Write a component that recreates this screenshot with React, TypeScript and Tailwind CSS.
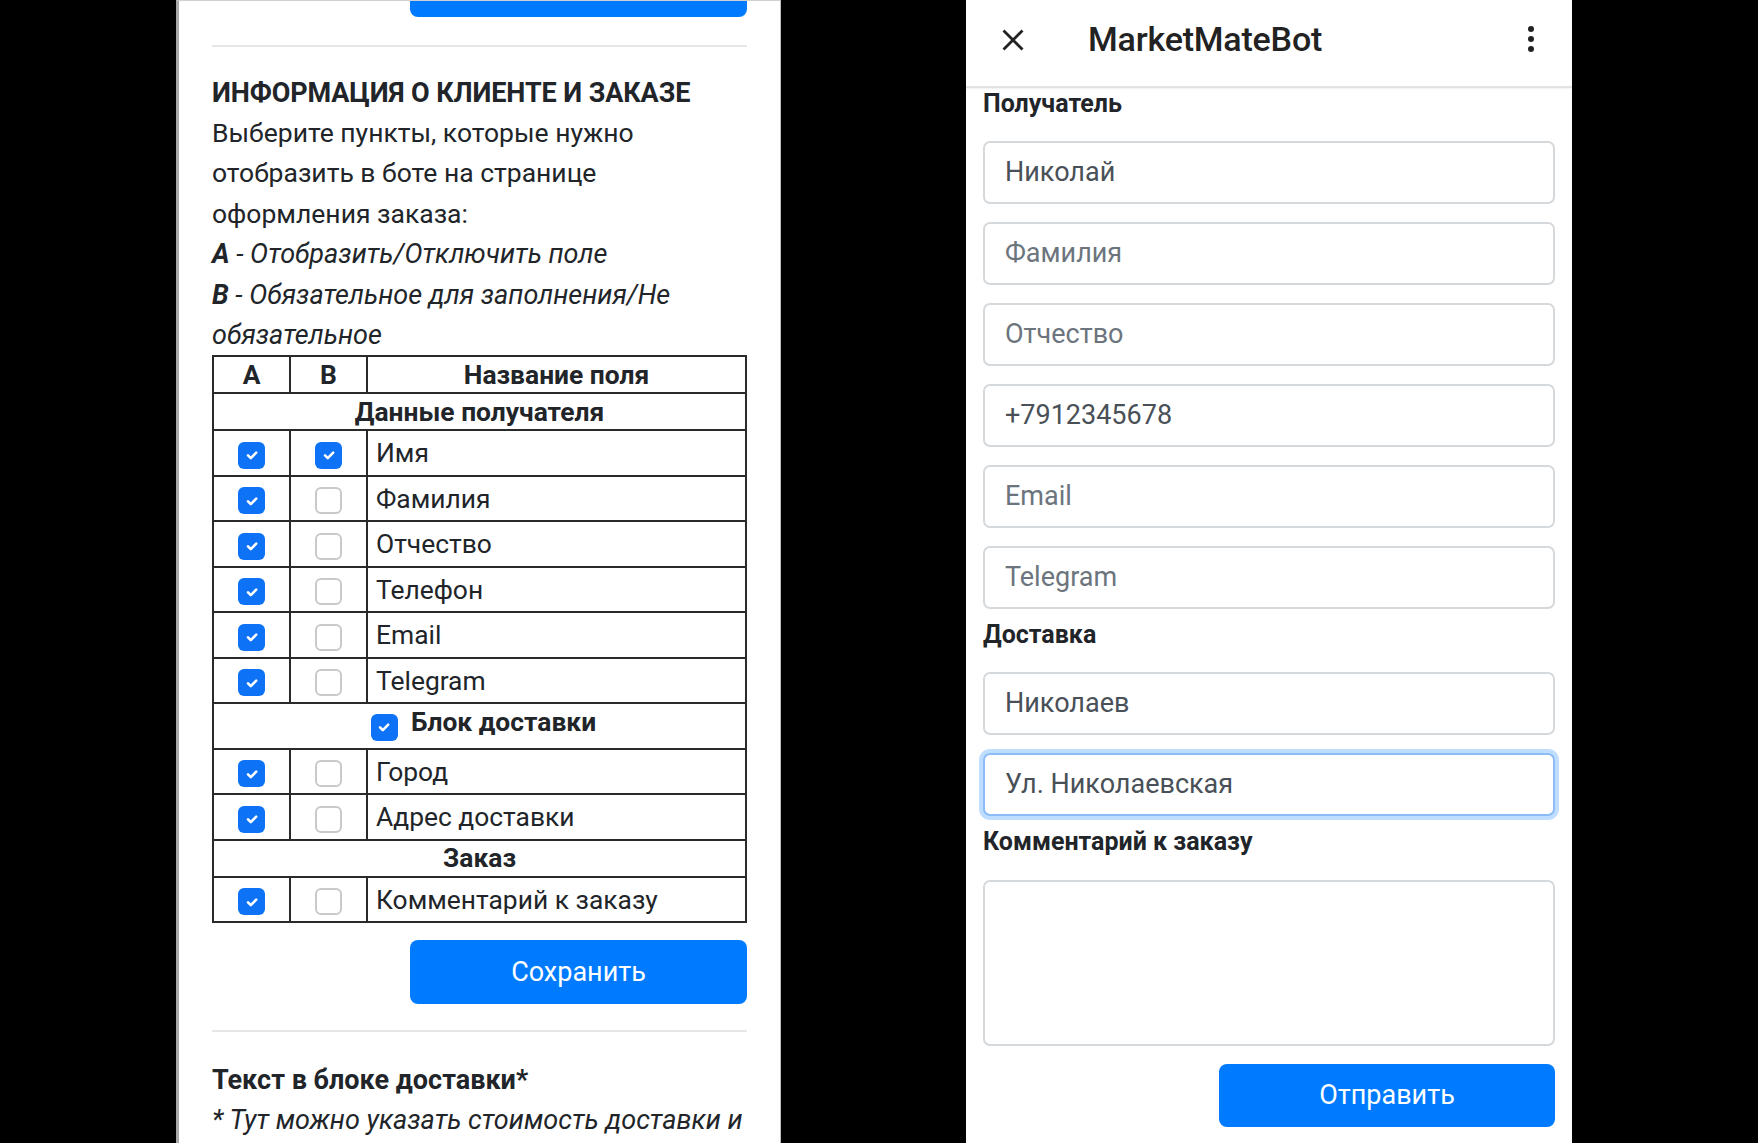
import React from "react";

function Check({ checked }: { checked: boolean }) {
  if (checked) {
    return (
      <span className="inline-flex w-[27px] h-[27px] rounded-[6px] bg-[#0d72f5] items-center justify-center align-middle">
        <svg viewBox="0 0 20 20" className="w-[20px] h-[20px]">
          <path d="M6 10.3l2.8 2.8L14.2 7.6" fill="none" stroke="white" strokeWidth="2.6" strokeLinecap="round" strokeLinejoin="round" />
        </svg>
      </span>
    );
  }
  return <span className="inline-block w-[27px] h-[27px] rounded-[6px] border-2 border-[#c9c9c9] bg-white align-middle" />;
}

const rows1: [string, boolean][] = [
  ["Имя", true],
  ["Фамилия", false],
  ["Отчество", false],
  ["Телефон", false],
  ["Email", false],
  ["Telegram", false],
];
const rows2: [string, boolean][] = [
  ["Город", false],
  ["Адрес доставки", false],
];

function Row({ name, b }: { name: string; b: boolean }) {
  return (
    <tr className="h-[45.5px]">
      <td className="border-2 border-[#2a2a2a] text-center p-0">
        <Check checked={true} />
      </td>
      <td className="border-2 border-[#2a2a2a] text-center p-0">
        <Check checked={b} />
      </td>
      <td className="border-2 border-[#2a2a2a] pl-[8px] py-0 text-left">{name}</td>
    </tr>
  );
}

function Input({ value, placeholder, focused }: { value?: string; placeholder?: string; focused?: boolean }) {
  return (
    <div
      className={
        focused
          ? "h-[63px] rounded-[7px] border-2 border-[#8cbcf7] shadow-[0_0_0_4px_rgba(0,123,255,0.25)] flex items-center pl-[20px] text-[27px] text-[#495057] bg-white"
          : "h-[63px] rounded-[7px] border-2 border-[#d6d9dc] flex items-center pl-[20px] text-[27px] bg-white"
      }
    >
      {value ? <span className="text-[#495057]">{value}</span> : <span className="text-[#6c757d]">{placeholder}</span>}
    </div>
  );
}

export default function App() {
  return (
    <div className="w-[1758px] h-[1143px] bg-black flex overflow-hidden font-['Roboto','Noto_Sans',sans-serif] text-[#212529]">
      {/* Left panel */}
      <div className="ml-[176px] w-[605px] h-full bg-white border-l-[3px] border-l-[#a8a8a8] border-t border-t-[#d0d0d0] border-r border-r-[#bdbdbd] overflow-hidden pl-[33px] pr-[33px] flex flex-col">
        <div className="ml-auto w-[337px] h-[16px] shrink-0 bg-[#007bff] rounded-b-[8px]" />
        <div className="mt-[28px] h-[2px] shrink-0 bg-[#e6e6e6]" />
        <div className="mt-[26px] text-[27px] leading-[40px] font-bold tracking-[-0.1px]">ИНФОРМАЦИЯ О КЛИЕНТЕ И ЗАКАЗЕ</div>
        <div className="text-[26.5px] leading-[40.4px]">
          <div>Выберите пункты, которые нужно</div>
          <div>отобразить в боте на странице</div>
          <div>оформления заказа:</div>
          <div className="italic text-[27px]">
            <span className="font-bold">A</span> - Отобразить/Отключить поле
          </div>
          <div className="italic text-[27px]">
            <span className="font-bold">B</span> - Обязательное для заполнения/Не
          </div>
          <div className="italic text-[27px]">обязательное</div>
        </div>
        <table className="w-[535px] border-collapse border-2 border-[#2a2a2a] text-[26.4px] leading-[32px] table-fixed">
          <colgroup>
            <col className="w-[77px]" />
            <col className="w-[77px]" />
            <col />
          </colgroup>
          <tbody>
            <tr className="h-[37px] font-bold">
              <td className="border-2 border-[#2a2a2a] text-center p-0">A</td>
              <td className="border-2 border-[#2a2a2a] text-center p-0">B</td>
              <td className="border-2 border-[#2a2a2a] text-center p-0">Название поля</td>
            </tr>
            <tr className="h-[37px] font-bold">
              <td colSpan={3} className="border-2 border-[#2a2a2a] text-center p-0">Данные получателя</td>
            </tr>
            {rows1.map(([n, b]) => (
              <Row key={n} name={n} b={b} />
            ))}
            <tr className="h-[45.5px]">
              <td colSpan={3} className="border-2 border-[#2a2a2a] p-0">
                <div className="flex items-center justify-center gap-[13px] pl-[8px]">
                  <span className="mt-[2px] flex">
                    <Check checked={true} />
                  </span>
                  <span className="font-bold mt-[-8px]">Блок доставки</span>
                </div>
              </td>
            </tr>
            {rows2.map(([n, b]) => (
              <Row key={n} name={n} b={b} />
            ))}
            <tr className="h-[37px] font-bold">
              <td colSpan={3} className="border-2 border-[#2a2a2a] text-center p-0">Заказ</td>
            </tr>
            <Row name="Комментарий к заказу" b={false} />
          </tbody>
        </table>
        <div className="mt-[17px] ml-auto w-[337px] h-[64px] shrink-0 bg-[#007bff] rounded-[8px] flex items-center justify-center text-white text-[27px]">
          Сохранить
        </div>
        <div className="mt-[26px] h-[2px] shrink-0 bg-[#e6e6e6]" />
        <div className="mt-[28px] text-[27px] leading-[40px] font-bold">Текст в блоке доставки*</div>
        <div className="text-[27px] leading-[40px] italic whitespace-nowrap">* Тут можно указать стоимость доставки и</div>
      </div>

      {/* Right panel */}
      <div className="ml-[185px] w-[606px] h-full bg-white flex flex-col">
        <div className="h-[88px] shrink-0 flex items-center border-b-2 border-b-[#e2e2e2] shadow-[0_1px_2px_rgba(0,0,0,0.06)]">
          <svg viewBox="0 0 24 24" className="ml-[35px] w-[24px] h-[24px] mt-[-6px]">
            <path d="M2.5 2.5L21.5 21.5M21.5 2.5L2.5 21.5" stroke="#222" strokeWidth="2.8" strokeLinecap="butt" />
          </svg>
          <div className="ml-[63px] mt-[-8px] text-[34px] font-medium text-[#222] tracking-[-0.2px]">MarketMateBot</div>
          <div className="ml-auto mr-[38px] mt-[-8px] flex flex-col gap-[4px]">
            <span className="w-[6px] h-[6px] rounded-full bg-[#222]" />
            <span className="w-[6px] h-[6px] rounded-full bg-[#222]" />
            <span className="w-[6px] h-[6px] rounded-full bg-[#222]" />
          </div>
        </div>
        <div className="px-[17px] flex flex-col">
          <div className="text-[25px] leading-[32px] font-bold">Получатель</div>
          <div className="mt-[21px]">
            <Input value="Николай" />
          </div>
          <div className="mt-[18px]">
            <Input placeholder="Фамилия" />
          </div>
          <div className="mt-[18px]">
            <Input placeholder="Отчество" />
          </div>
          <div className="mt-[18px]">
            <Input value="+7912345678" />
          </div>
          <div className="mt-[18px]">
            <Input placeholder="Email" />
          </div>
          <div className="mt-[18px]">
            <Input placeholder="Telegram" />
          </div>
          <div className="mt-[10px] text-[25px] leading-[32px] font-bold">Доставка</div>
          <div className="mt-[21px]">
            <Input value="Николаев" />
          </div>
          <div className="mt-[18px]">
            <Input value="Ул. Николаевская" focused />
          </div>
          <div className="mt-[10px] text-[25px] leading-[32px] font-bold">Комментарий к заказу</div>
          <textarea
            readOnly
            className="mt-[22px] h-[166px] rounded-[7px] border-2 border-[#d6d9dc] outline-none bg-white resize-none"
          />
          <div className="mt-[18px] ml-auto w-[336px] h-[63px] bg-[#007bff] rounded-[8px] flex items-center justify-center text-white text-[27px]">
            Отправить
          </div>
        </div>
      </div>
    </div>
  );
}
